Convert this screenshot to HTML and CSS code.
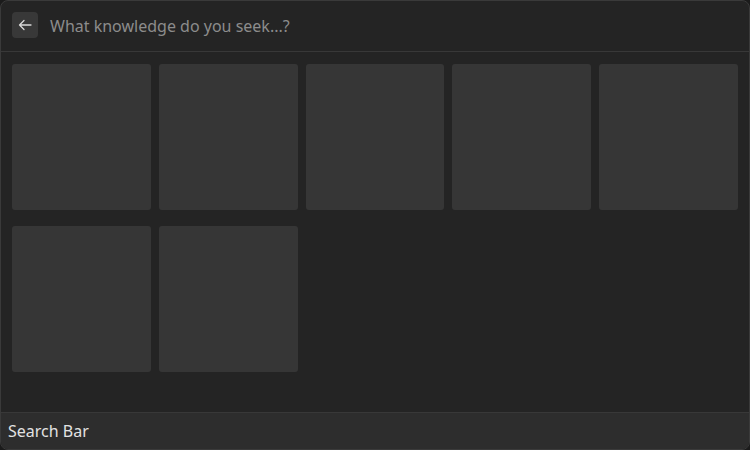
FILE: index.html
```html
<!DOCTYPE html>
<html lang="en">
<head>
<meta charset="utf-8">
<link rel="stylesheet" href="styles.css">
</head>
<body>
<div class="window">
  <header class="search-header">
    <button class="back-btn" aria-label="Back">
      <svg width="14" height="12" viewBox="0 0 14 12" fill="none" stroke="#d8d8d8" stroke-width="1.3" stroke-linecap="round" stroke-linejoin="round"><path d="M13 6H1.5M6 1.5L1.5 6L6 10.5"/></svg>
    </button>
    <span class="placeholder">What knowledge do you seek...?</span>
  </header>
  <main class="grid">
    <div class="tile"></div>
    <div class="tile"></div>
    <div class="tile"></div>
    <div class="tile"></div>
    <div class="tile"></div>
    <div class="tile"></div>
    <div class="tile"></div>
  </main>
  <footer class="status">Search Bar</footer>
</div>
</body>
</html>
```
FILE: styles.css
```css
html, body {
  margin: 0;
  padding: 0;
  background: #1b1b1b;
}
.window {
  box-sizing: border-box;
  width: 750px;
  height: 450px;
  background: #242424;
  border: 1px solid #3a3a3a;
  border-radius: 8px;
  overflow: hidden;
  display: flex;
  flex-direction: column;
  font-family: "Noto Sans", "Open Sans", sans-serif;
}
.search-header {
  height: 50px;
  flex: none;
  display: flex;
  align-items: center;
  padding: 0 11px;
  gap: 12px;
  border-bottom: 1px solid #383838;
}
.back-btn {
  width: 26px;
  height: 26px;
  margin-top: -2px;
  border: none;
  border-radius: 4px;
  background: #383838;
  display: flex;
  align-items: center;
  justify-content: center;
  padding: 0;
}
.placeholder {
  color: #8c8c8c;
  font-size: 16px;
  margin-top: -1px;
}
.grid {
  flex: 1;
  display: grid;
  grid-template-columns: repeat(5, 1fr);
  grid-auto-rows: 146px;
  column-gap: 8px;
  row-gap: 16px;
  padding: 12px 11px 0 11px;
  align-content: start;
}
.tile {
  background: #363636;
  border-radius: 3px;
}
.status {
  flex: none;
  height: 37px;
  box-sizing: border-box;
  border-top: 1px solid #383838;
  background: #2d2d2d;
  color: #e2e2e2;
  font-size: 16px;
  padding: 8px 7px 0;
  line-height: 20px;
}
```
